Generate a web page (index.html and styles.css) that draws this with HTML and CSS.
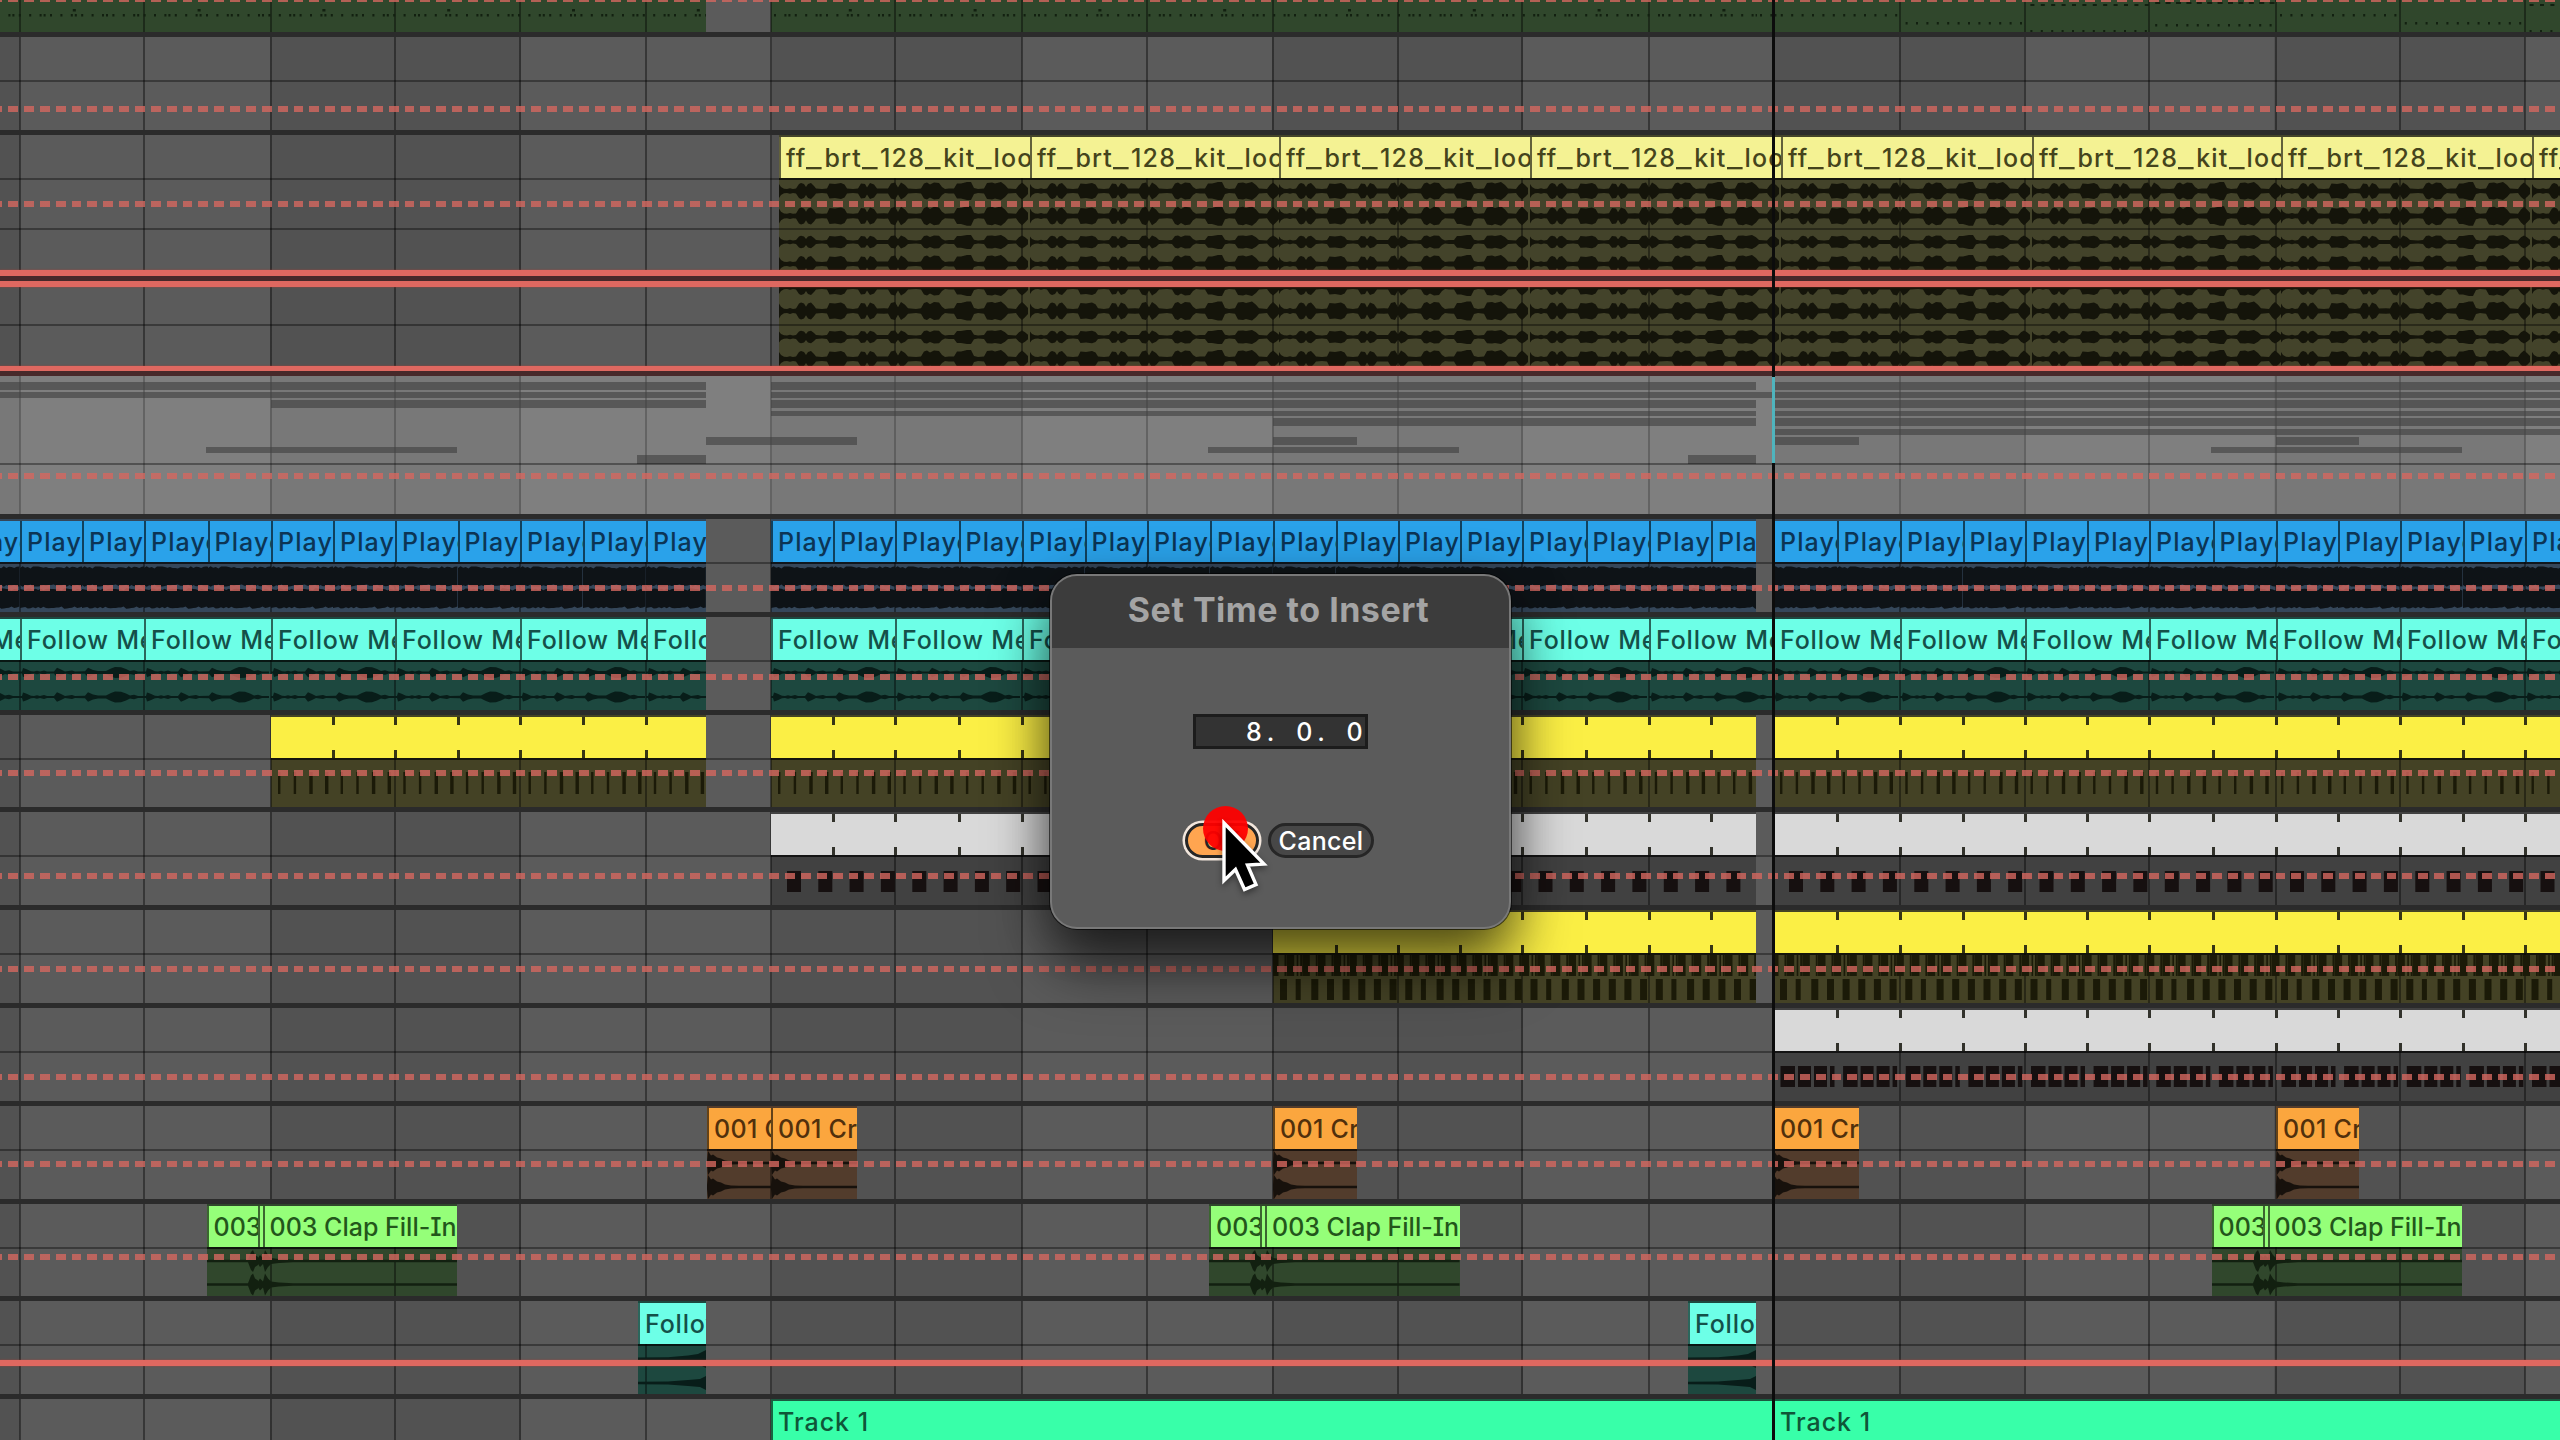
FILE: index.html
```html
<!DOCTYPE html>
<html lang="en">
<head>
    <meta charset="utf-8">
    <title>Arrangement</title>
    <link rel="stylesheet" href="styles.css">
</head>
<body>

<div class="arrangement" id="arrangement">
    <div class="playhead"></div>
    <div class="playhead-note"></div>
</div>

<div class="dialog">
    <div class="dialog-title">Set Time to Insert</div>
    <div class="dialog-body">
        <div class="time-field">
            <span>8</span><span>.</span><span></span><span>0</span><span>.</span><span></span><span>0</span>
        </div>
        <div class="buttons">
            <button class="btn btn-ok">OK</button>
            <button class="btn btn-cancel">Cancel</button>
        </div>
    </div>
</div>

<div class="click-dot"></div>
<svg class="cursor" width="60" height="84" viewBox="0 0 60 84">
    <path d="M5 5 L5 62.5 L16.5 51.5 L25.5 71.5 L37 66.5 L28.5 47 L45 46 Z" fill="#000" stroke="#fff" stroke-width="3.4"/>
</svg>

<script src="app.js"></script>
</body>
</html>
```

FILE: styles.css
```css
:root {
    --shade: repeating-linear-gradient(90deg, #525252 0 19.8px, #5b5b5b 19.8px 270.5px, #525252 270.5px 501px);
}

body {
    margin: 0;
    width: 2560px;
    height: 1440px;
    overflow: hidden;
    position: relative;
    font-family: Inter, "Liberation Sans", sans-serif;
}

.arrangement {
    position: relative;
    display: flex;
    flex-direction: column;
    height: 1440px;
    overflow: hidden;
    background-image: var(--grid), var(--shade);
}

.track {
    position: relative;
    flex: none;
    box-sizing: border-box;
    border-bottom: 5px solid #2b2b2b;
    overflow: hidden;
}

.track.warm {
    border-bottom-color: #47292a;
}

.track.selected {
    background: rgba(255, 255, 255, 0.225);
}

.split {
    position: absolute;
    left: 0;
    right: 0;
    height: 2px;
    background: rgba(0, 0, 0, 0.36);
}

/* clips */
.clip {
    position: absolute;
    top: 0;
    bottom: 0;
    box-sizing: border-box;
    display: flex;
    flex-direction: column;
    overflow: hidden;
    background: var(--dim);
}

.clip-head {
    flex: none;
    box-sizing: border-box;
    height: 41px;
    margin-top: 2px;
    padding-left: 5px;
    border-left: 2px solid rgba(0, 0, 0, 0.6);
    background: var(--color);
    color: var(--ink);
    font-size: 25px;
    font-weight: 500;
    letter-spacing: 0.3px;
    line-height: 42px;
    font-feature-settings: "cv08";
    white-space: nowrap;
    overflow: hidden;
}

.straw .clip-head {
    letter-spacing: 1.2px;
}

.straw .clip-head span {
    display: inline-block;
    width: 18px;
    transform: scaleX(1.35);
    transform-origin: left;
}

.blue .clip-head {
    letter-spacing: 1.1px;
}

.aqua .clip-head {
    letter-spacing: 0.8px;
}

.green .clip-head {
    letter-spacing: 0;
}

.mint .clip-head {
    letter-spacing: 1px;
}

.clip-body {
    flex: 1;
    min-height: 0;
    border-top: 2px solid rgba(0, 0, 0, 0.5);
    background-image: var(--grid);
    background-attachment: fixed;
}

.clip-body svg {
    display: block;
}

.no-head .clip-body {
    border-top: none;
}

.ticks .clip-head {
    border-left-color: transparent;
    background-clip: border-box;
}

.tick {
    position: absolute;
    width: 3px;
    height: 8px;
    top: 2px;
    background: rgba(20, 20, 12, 0.85);
}

.tick.low {
    top: 35px;
}

.straw  { --color: #f4f293; --ink: #45441c; --dim: #43432a; --wave: #14140a; }
.blue   { --color: #2aa2ea; --ink: #0c3555; --dim: #35475a; --wave: #0e1317; }
.aqua   { --color: #6dffe7; --ink: #145049; --dim: #1d483f; --wave: #081d19; }
.yellow { --color: #fbef45; --ink: #45441c; --dim: #444225; --wave: #1b1a08; }
.white  { --color: #d9d9d9; --ink: #333333; --dim: #414141; --wave: #161010; }
.orange { --color: #fba63e; --ink: #51300c; --dim: #523c2c; --wave: #17110c; }
.green  { --color: #95ff79; --ink: #23561b; --dim: #30472c; --wave: #122010; }
.mint   { --color: #38ffa9; --ink: #0f5638; --dim: #1c5a40; --wave: #081d19; }

.note {
    position: absolute;
    background: rgba(64, 64, 64, 0.62);
}

/* automation */
.auto {
    position: absolute;
    left: 0;
    right: 0;
    height: 6px;
    opacity: 0.8;
    background-image: repeating-linear-gradient(90deg, #d4675f 0 2.2px, transparent 2.2px 8.2px, #d4675f 8.2px 15.856px);
}

.auto.solid {
    opacity: 1;
    background: #df6860;
    box-shadow: 0 0 2px rgba(200, 60, 50, 0.7);
}

.playhead {
    position: absolute;
    z-index: 2;
    left: 1772px;
    top: 0;
    width: 3px;
    height: 1440px;
    background: #0c0c0c;
}

.playhead-note {
    position: absolute;
    z-index: 3;
    left: 1772px;
    top: 377px;
    width: 3px;
    height: 86px;
    background: #4fb4bd;
}

/* dialog */
.dialog {
    position: absolute;
    z-index: 5;
    left: 1050px;
    top: 574px;
    width: 461px;
    height: 355px;
    box-sizing: border-box;
    border: 2px solid #787878;
    border-radius: 27px;
    overflow: hidden;
    background: #5b5b5b;
    display: flex;
    flex-direction: column;
    box-shadow: 0 0 0 1px rgba(0, 0, 0, 0.6), 0 36px 60px rgba(0, 0, 0, 0.62), 0 4px 50px rgba(0, 0, 0, 0.25);
}

.dialog-title {
    height: 72px;
    line-height: 68px;
    padding-right: 4px;
    background: #3c3c3c;
    color: #a4a4a4;
    font-size: 34px;
    font-weight: 700;
    letter-spacing: 0.5px;
    text-align: center;
}

.dialog-body {
    display: flex;
    flex-direction: column;
    align-items: center;
    padding-top: 66px;
}

.time-field {
    box-sizing: border-box;
    width: 175px;
    height: 35px;
    border: 3px solid #1c1c1c;
    background: #333;
    color: #fff;
    font-size: 25px;
    font-weight: 500;
    line-height: 30px;
    display: flex;
    justify-content: flex-end;
    padding-right: 2px;
}

.time-field span {
    width: 16.8px;
    text-align: center;
}

.buttons {
    display: flex;
    align-items: center;
    gap: 9px;
    margin-top: 74px;
    margin-right: 4px;
}

.btn {
    box-sizing: border-box;
    padding: 0;
    font-family: inherit;
    font-size: 25px;
    font-weight: 500;
    letter-spacing: 0.3px;
    border: 3px solid #262626;
    border-radius: 20px;
    height: 35px;
    line-height: 28px;
}

.btn-ok {
    width: 74px;
    margin-left: 2px;
    background: #ffa550;
    color: #262626;
    box-shadow: 0 0 0 2.5px #f2e6dc;
}

.btn-cancel {
    width: 106px;
    background: #474747;
    color: #fff;
}

.click-dot {
    position: absolute;
    z-index: 6;
    left: 1203px;
    top: 806px;
    width: 45px;
    height: 45px;
    border-radius: 50%;
    background: rgba(255, 0, 0, 0.94);
}

.cursor {
    position: absolute;
    z-index: 7;
    left: 1219px;
    top: 818px;
    filter: drop-shadow(0 3px 3px rgba(0, 0, 0, 0.4));
}
```

FILE: app.js
```js
const BAR = 125.25;
const END = 2560;

const LINES = [20, 144, 271, 395, 520, 646, 771, 895, 1022, 1147, 1273, 1398, 1522, 1649, 1773, 1900, 2025, 2149, 2276, 2400, 2525];

function bar(n) {
    if (n < 0) return LINES[0] + n * BAR;
    const i = Math.floor(n);
    if (i >= LINES.length - 1) return LINES[LINES.length - 1] + (n - LINES.length + 1) * BAR;
    return LINES[i] + (n - i) * (LINES[i + 1] - LINES[i]);
}

const stops = ['transparent 0'];
LINES.forEach(x => stops.push(`transparent ${x - 1}px`, `rgba(0,0,0,0.4) ${x - 1}px ${x + 1}px`, `transparent ${x + 1}px`));
document.documentElement.style.setProperty('--grid', `linear-gradient(90deg, ${stops.join(', ')})`);

// mirrored envelope around cy, points are [x, half height]
function wave(points, cy) {
    const top = points.map(p => p[0].toFixed(1) + ' ' + (cy - p[1]).toFixed(1));
    const bottom = points.slice().reverse().map(p => p[0].toFixed(1) + ' ' + (cy + p[1]).toFixed(1));
    return 'M' + top.concat(bottom).join('L') + 'Z';
}

function rect(x, y, w, h) {
    return `M${x.toFixed(1)} ${y}h${w.toFixed(1)}v${h}h-${w.toFixed(1)}Z`;
}

const scale = (points, k) => points.map(p => [p[0], Math.max(1, p[1] * k)]);

const KIT = [
    [0, 7], [2, 4], [5, 2.2], [8, 2], [11, 2.8], [14, 2], [17, 2.4], [20, 7], [22, 8], [25, 7], [27, 4], [29, 7], [32, 8], [35, 5], [37, 2.5],
    [43, 2], [48, 2.4], [50.5, 7.5], [56, 7], [62, 8], [65.5, 6.5], [68, 2.6], [74, 2], [79, 2.6], [82, 7.5], [86, 7], [88, 3.4], [91, 8],
    [95, 6.5], [98, 2.4], [105, 2.6], [109, 2.4], [112, 7.5], [116, 8.5], [119, 3.6], [122, 8.5], [126, 6], [129, 2.6], [137, 2], [142, 2.6], [145, 7.5],
    [148, 8.5], [151, 6.4], [155, 8.5], [160, 8], [163, 4], [166, 2], [170, 2.4], [175, 2.6], [178, 7.5], [182, 7.5], [188, 9], [192, 9], [195, 3], [199, 2],
    [205, 2.6], [208, 8], [213, 8.5], [216, 7.5], [222, 9], [226, 6], [229, 2.6], [237, 2], [240, 6], [243, 8.5], [246, 6], [249, 3]
];

function noise(w, seed) {
    const pts = [];
    let s = seed;
    for (let x = 0; x <= w + 2; x += 2.6) {
        s = (s * 73 + 41) % 997;
        pts.push([x, 7.8 + 2.6 * (s / 997)]);
    }
    return pts;
}

const LOOP = [
    [0, 1], [2, 1], [3, 4.5], [6, 3.6], [11, 1.2], [14, 1], [17, 1.8], [20, 1], [24, 2], [27, 1], [34, 1], [37, 4.8], [41, 3], [45, 1],
    [52, 2], [55, 1], [65, 1.2], [68, 4.8], [73, 2.6], [78, 1.6], [86, 1.6], [91, 4], [95, 5.4], [101, 5.2], [106, 3.6], [110, 1.4], [114, 2.2], [118, 1], [125, 1]
];

function hit(w) {
    return [[0, 2], [1, 12], [4, 7.5], [6, 8.4], [10, 5.6], [14, 4.6], [18, 2.6], [24, 1.6], [32, 1.2], [w, 1.2]];
}

// body drawings, one per clip kind
const bodies = {
    kit: () => wave(KIT, 11) + wave(scale(KIT, 1.08), 36) + wave(scale(KIT, 0.78), 62) + wave(scale(KIT, 1), 84),
    kitLow: () => wave(KIT, 6) + wave(scale(KIT, 1.05), 30) + wave(scale(KIT, 0.78), 56) + wave(scale(KIT, 1), 78),
    noise: w => wave(noise(w, 17), 12.5) + wave(noise(w, 91), 34.5),
    loop: () => wave(LOOP, 10.5) + wave(LOOP, 35),
    hats: w => {
        let d = '';
        for (let x = 7, i = 0; x < w - 2; x += BAR / 8, i++) d += rect(x, 12, i % 4 < 2 ? 2.4 : 3.4, 22);
        return d;
    },
    blocks: w => {
        let d = '';
        for (let x = 16; x < w - 12; x += BAR / 4) d += rect(x, 14, 14, 21);
        return d;
    },
    dense: w => {
        let d = '';
        for (let x = 0, i = 0; x < w - 3; x += BAR / 8, i++) {
            d += rect(x - 2, 0, 7.5, 21) + rect(x + 11.5, 0, 1.8, 21);
            if (i % 3 == 1) d += rect(x + 8, 0, 1.6, 21);
            d += rect(x + 7, 24, i % 8 == 1 ? 5 : 7, 21);
        }
        return d;
    },
    fours: w => {
        let d = '';
        for (let x = 0; x < w; x += BAR / 2) {
            d += rect(x + 7.5, 13, 14.5, 21) + rect(x + 25, 13, 13, 21) + rect(x + 41, 13, 13, 21) + rect(x + 57, 13, 4.5, 21);
        }
        return d;
    },
    hit: w => wave(hit(w), 12) + wave(hit(w), 36),
    clapIn: w => {
        const p = [[0, 1.2], [w - 10, 1.2], [w - 7, 9], [w - 5, 11], [w - 3, 6], [w, 4]];
        return wave(p, 12) + wave(p, 35.5);
    },
    clapMid: w => wave([[0, 3], [2, 6], [w, 3]], 12) + wave([[0, 3], [2, 6], [w, 3]], 35.5),
    clap: w => {
        const p = [[0, 3], [2, 11], [5, 6], [8, 3], [16, 2], [30, 1.2], [w, 1.2]];
        return wave(p, 12) + wave(p, 35.5);
    },
    rise: w => wave([[0, 1.4], [30, 1.8], [50, 3.5], [60, 5], [w, 9]], 13) + wave([[0, 1.2], [30, 1.6], [50, 3], [62, 4], [w, 7]], 37),
    dots: (w, x0) => {
        let d = '';
        for (let x = 3, i = 0; x < w; x += 10.4, i++) {
            const n = LINES.filter(l => l <= x0 + x).length - 1;
            if (n < 14) {
                d += rect(x, 14, 2, 2.4);
                if (i % 3 == 1) d += rect(x + 4, 14, 2, 2.4);
                if (i % 12 == 7) d += rect(x + 2, 9, 3, 2.4);
            } else {
                const y = [14, 22, 30, 24][(n - 14) % 4];
                d += rect(x, y, 2, 2.4);
                if (y == 30) d += rect(x, 4, 4, 2);
                if (y == 24) d += rect(x, 2, 5, 2);
            }
        }
        return d;
    }
};

const span = (x, to, clip) => ({ ...clip, x: x, w: to - x });

// row of equal clips, step counted in bars
function repeat(from, to, step, clip) {
    const list = [];
    for (let n = from; bar(n) < to - 1; n += step) {
        list.push(span(bar(n), Math.min(bar(n + step), to), clip));
    }
    return list;
}

function kitRow(clip) {
    const edges = [779, 1030, 1279, 1530, 1781, 2032, 2281, 2532, 2783];
    return edges.slice(0, -1).map((x, i) => span(x, edges[i + 1], clip));
}

const play = { name: 'Played', color: 'blue', body: 'noise' };
const follow = { name: 'Follow Me', color: 'aqua', body: 'loop' };
const crash = { name: '001 Crash', color: 'orange', body: 'hit' };
const CUT = 706;
const CUT2 = 1756;

const claps = [206.5, 1209, 2211.5].flatMap(x => [
    span(x, x + 51, { name: '003 Clap', color: 'green', body: 'clapIn' }),
    span(x + 51, x + 56, { name: '', color: 'green', body: 'clapMid' }),
    span(x + 56, x + 250.5, { name: '003 Clap Fill-In', color: 'green', body: 'clap' })
]);

const bars = (color, body, ranges) => ranges.map(r => span(r[0], r[1], { name: '', color: color, body: body, ticks: true }));

const notes = [];
const addNotes = (y, h, ranges) => ranges.forEach(r => notes.push({ x: r[0], w: r[1] - r[0], y: y - 376, h: h }));
addNotes(382, 8, [[0, CUT], [bar(6), CUT2], [1775, END]]);
addNotes(392, 6, [[0, CUT], [bar(6), END]]);
addNotes(400, 8, [[bar(2), CUT], [bar(6), CUT2], [1775, END]]);
addNotes(411, 5, [[bar(6), CUT2], [1775, END]]);
addNotes(418, 8, [[bar(10), CUT2], [1775, END]]);
addNotes(429, 6, [[1775, END]]);
addNotes(437, 8, [[CUT, 857], [bar(10), 1357], [1775, 1859], [bar(18), 2359]]);
addNotes(447, 6, [[206, 457], [1208, 1459], [2211, 2462]]);
addNotes(455, 9, [[637, CUT], [1688, CUT2]]);

const tracks = [
    { h: 37, auto: [-4], clips: [[-5, CUT], [bar(6), 1757], [1757, END]].map(r => span(r[0], r[1], { color: 'green', body: 'dots', bare: true })) },
    { h: 98, split: [43], auto: [69] },
    { h: 146, split: [43, 93], auto: [66], solid: [135], cls: 'warm', clips: kitRow({ name: 'ff_brt_128_kit_loop', color: 'straw', body: 'kit' }) },
    { h: 95, split: [43], solid: [0, 85], cls: 'warm', clips: kitRow({ color: 'straw', body: 'kitLow', bare: true }) },
    { h: 143, split: [87], auto: [97], cls: 'selected', notes: notes },
    { h: 98, split: [43], auto: [66], clips: [
        ...repeat(-0.5, CUT, 0.5, play),
        ...repeat(6, CUT2, 0.5, play),
        ...repeat(14, END, 0.5, play)
    ] },
    { h: 98, split: [43], auto: [57], clips: [
        ...repeat(-1, CUT, 1, follow),
        ...repeat(6, END, 1, follow)
    ] },
    { h: 97, split: [43], auto: [55], clips: bars('yellow', 'hats', [[bar(2), CUT], [bar(6), CUT2], [bar(14), END]]) },
    { h: 98, split: [43], auto: [61], clips: bars('white', 'blocks', [[bar(6), CUT2], [bar(14), END]]) },
    { h: 98, split: [43], auto: [56], clips: bars('yellow', 'dense', [[bar(10), CUT2], [bar(14), END]]) },
    { h: 98, split: [43], auto: [66], clips: bars('white', 'fours', [[bar(14), END]]) },
    { h: 98, split: [43], auto: [55], clips: [
        span(707, bar(6), crash), span(bar(6), 857, crash), span(bar(10), 1357, crash),
        span(bar(14), 1859, crash), span(bar(18), 2359, crash)
    ] },
    { h: 97, split: [43], auto: [50], clips: claps },
    { h: 98, split: [43], solid: [59], clips: [638, 1688].map(x => span(x, x + 68, { name: 'Follow Me', color: 'aqua', body: 'rise' })) },
    { h: 98, clips: [
        span(bar(6), bar(14), { name: 'Track 1', color: 'mint' }),
        span(bar(14), END, { name: 'Track 1', color: 'mint' })
    ] }
];

function makeDiv(cls, style) {
    const el = document.createElement('div');
    el.className = cls;
    for (const key in style) el.style[key] = style[key] + 'px';
    return el;
}

function makeClip(c) {
    const el = makeDiv('clip ' + c.color + (c.bare ? ' no-head' : '') + (c.ticks ? ' ticks' : ''), { left: c.x, width: c.w });
    if (!c.bare) {
        const head = makeDiv('clip-head');
        head.innerHTML = c.name.replace(/_/g, '<span>_</span>');
        el.appendChild(head);
    }
    const body = makeDiv('clip-body');
    if (c.body) {
        body.innerHTML = `<svg width="${c.w}" height="100"><path fill="var(--wave)" d="${bodies[c.body](c.w, c.x)}"/></svg>`;
    }
    el.appendChild(body);
    if (c.ticks) {
        for (let n = 0; bar(n) < c.x + c.w - 2; n += 0.5) {
            const x = bar(n) - c.x - 1;
            if (x < 5) continue;
            el.appendChild(makeDiv('tick', { left: x }));
            el.appendChild(makeDiv('tick low', { left: x }));
        }
    }
    return el;
}

const root = document.getElementById('arrangement');
tracks.forEach(t => {
    const row = makeDiv('track ' + (t.cls || ''), { height: t.h });
    (t.clips || []).forEach(c => row.appendChild(makeClip(c)));
    (t.notes || []).forEach(n => row.appendChild(makeDiv('note', { left: n.x, width: n.w, top: n.y, height: n.h })));
    (t.split || []).forEach(y => row.appendChild(makeDiv('split', { top: y })));
    (t.auto || []).forEach(y => row.appendChild(makeDiv('auto', { top: y })));
    (t.solid || []).forEach(y => row.appendChild(makeDiv('auto solid', { top: y })));
    root.appendChild(row);
});
```
